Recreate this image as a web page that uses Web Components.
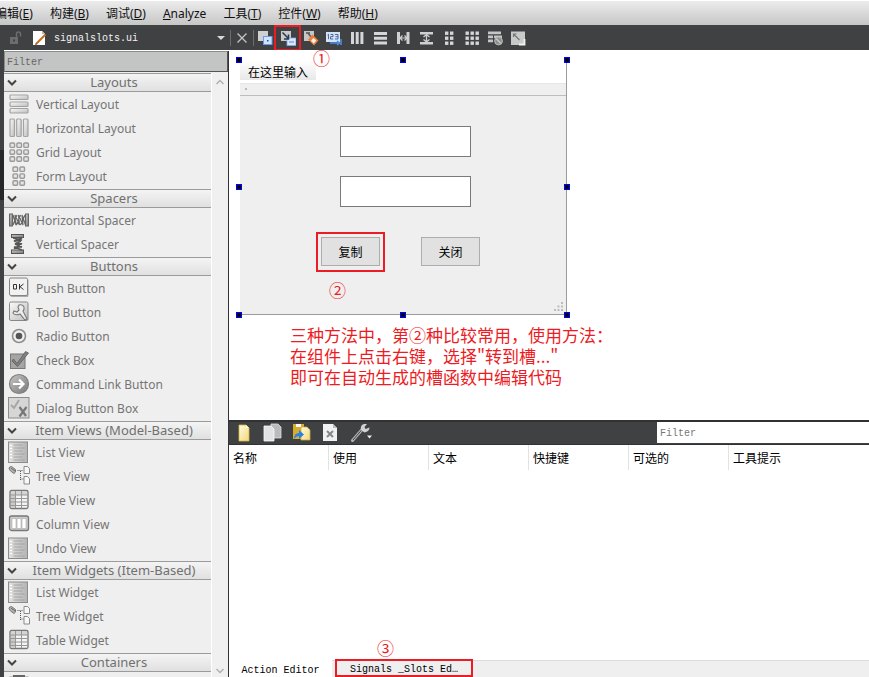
<!DOCTYPE html>
<html lang="zh-CN">
<head>
<meta charset="utf-8">
<meta name="viewport" content="width=device-width, initial-scale=1">
<title>signalslots.ui</title>
<style>
  html, body { margin: 0; height: 100%; }
  body {
    --ui: "Noto Sans", "Noto Sans CJK SC", sans-serif;
    --cjk: "Noto Sans CJK SC", sans-serif;
    --mono: "Liberation Mono", "Noto Sans CJK SC", monospace;
    --dark: #404142;
    --red: #ed1c24;
    font: 12px/16px var(--ui);
    color: #000;
    overflow: hidden;
  }
</style>
</head>
<body>
<script>
const define = (name, html, setup) => {
  const template = document.createElement('template');
  template.innerHTML = html;
  customElements.define(name, class extends HTMLElement {
    constructor() {
      super();
      this.attachShadow({ mode: 'open' }).append(template.content.cloneNode(true));
    }
    connectedCallback() {
      if (setup && !this.ready) { this.ready = true; setup(this, this.shadowRoot); }
    }
  });
};

/* ---------- icons ---------- */
const defs = `<defs>
  <linearGradient id="g" x1="0" y1="0" x2="1" y2="1"><stop offset="0" stop-color="#fafafa"/><stop offset="1" stop-color="#bdbdbd"/></linearGradient>
  <linearGradient id="d" x1="0" y1="0" x2="1" y2="1"><stop offset="0" stop-color="#c8c8c8"/><stop offset="1" stop-color="#777"/></linearGradient>
  <linearGradient id="h"><stop offset="0" stop-color="#e2e2e2"/><stop offset="1" stop-color="#b4b4b4"/></linearGradient>
  <linearGradient id="y" x1="0" y1="0" x2="1" y2="1"><stop offset="0" stop-color="#fffbe0"/><stop offset="1" stop-color="#f2d87a"/></linearGradient>
</defs>`;
const cells = (cols, rows, x0, y0) => {
  let s = '';
  for (let r = 0; r < rows; r++) for (let c = 0; c < cols; c++)
    s += `<rect x="${x0 + c * 6.9}" y="${y0 + r * 6.9}" width="4.6" height="4.4" rx="1"/>`;
  return `<g fill="#e4e4e4" stroke="#9a9a9a" stroke-width="1.4">${s}</g>`;
};
const dots = (cols, x0) => {
  let s = '';
  for (let r = 0; r < 3; r++) for (let c = 0; c < cols; c++)
    s += `<rect x="${x0 + c * 5}" y="${1.5 + r * 5}" width="3.4" height="3.4"/>`;
  return `<g fill="#d6d6d6">${s}</g>`;
};
const listArt = `<rect x=".5" y="1" width="19" height="20.5" fill="url(#h)" stroke="#8c8c8c"/>
  <path d="M2 4.5h2M2 7.5h2M2 10.500h2M2 13.500h2M2 16.500h2" stroke="#fff"/><path d="M5.500 4h9M5.500 7h11M5.500 10h9M5.500 13h11M5.500 16h9M5.500 19h11" stroke="#9a9a9a" stroke-width=".8"/><path d="M21 1v21" stroke="#fff"/>`;
const treeArt = `<path d="M1 3.500q0-2 2.500-2l4 3q.800 3-1.500 4l-3.500-2.500z" fill="#b3b3b3" stroke="#777"/><path d="M3 3l4 3" stroke="#666"/>
  <path d="M9.500 5.500h5M12.500 6v9.500M12.500 14h3" stroke="#555" stroke-dasharray="1 1" fill="none"/>
  <path d="M16 1.500h3.500l2 2v5H16zM16 11.500h3.500l2 2v5.500H16z" fill="#f8f8f8" stroke="#8a8a8a"/>`;
const tableArt = `<rect x="2" y="1.500" width="18" height="18" rx="1.500" fill="#f3f3f3" stroke="#777" stroke-width="1.300"/><path d="M3 3h4v16H3z" fill="#ccc"/><path d="M3 3h16v3H3z" fill="#d4d4d4"/>
  <path d="M7.500 2v17M13.500 2v17M2 6h18M2 9.500h18M2 13h18M2 16.500h18" stroke="#979797"/>`;
const art = {
  vlayout: `<g fill="url(#g)" stroke="#a3a3a3" stroke-width="1.200"><rect x="2" y="2" width="18" height="4.500" rx="1"/><rect x="2" y="9" width="18" height="4.500" rx="1"/><rect x="2" y="15.500" width="18" height="4.500" rx="1"/></g>`,
  hlayout: `<g fill="url(#g)" stroke="#a3a3a3" stroke-width="1.200"><rect x="2" y="2" width="4.500" height="17.500" rx="1"/><rect x="8.700" y="2" width="4.500" height="17.500" rx="1"/><rect x="15.500" y="2" width="4.500" height="17.500" rx="1"/></g>`,
  grid: cells(3, 3, 2, 2),
  form: cells(2, 3, 5, 2),
  hspacer: `<g fill="url(#d)" stroke="#666"><rect x="1.500" y="5" width="3" height="12"/><rect x="17.500" y="5" width="3" height="12"/></g><path d="M5 6l3 10-1-10 4.500 10-1-10 4.500 10-1-10 3.500 10M5 16l4-10M8.500 16l4-10M12.500 16l4.500-10" fill="none" stroke="#666" stroke-width="1.200"/>`,
  vspacer: `<g fill="url(#d)" stroke="#555"><rect x="3.500" y="1.500" width="12" height="3"/><rect x="3.500" y="17" width="12" height="3.500"/></g><path d="M5 5l9 2-8 1 8 3-7 0 7 3-8 0 8 3M14 5L6 8M13 8l-6 3M13 11l-7 5" fill="none" stroke="#555" stroke-width="1.400"/>`,
  push: `<rect x="2.500" y="2" width="18" height="18" rx="1.500" fill="#aaa"/><rect x="1.500" y="1" width="18" height="17.500" rx="1.500" fill="#f1f1f1" stroke="#848484"/><path d="M5.500 7.500h3v4.500h-3zM11.500 7v5.500M15.500 7l-3.500 2.700 3.500 2.800" fill="none" stroke="#333"/>`,
  tool: `<rect x="1.500" y="1" width="18.500" height="18.500" rx="1.500" fill="url(#g)" stroke="#888"/><path d="M11 4q4-1 5 2 .500 3-1 4l4 8-2 1-5-6q-5 2-7-1l1-2 3 1 2-2-1-3z" fill="#ececec" stroke="#777" stroke-width="1.100"/>`,
  radio: `<circle cx="11" cy="11" r="6.500" fill="#efefef" stroke="#8d8d8d" stroke-width="1.600"/><circle cx="11" cy="11" r="3.300" fill="#555"/>`,
  check: `<rect x="2.500" y="5" width="14.500" height="14.500" fill="#a5a5a5" stroke="#777"/><path d="M5.500 10l3.500 4.500L17.500 2.500l3 1.500L9.500 17.500 4 12z" fill="#808080" stroke="#5c5c5c" stroke-width=".8"/>`,
  link: `<circle cx="11" cy="11" r="9.500" fill="url(#d)" stroke="#808080" stroke-width="1.200"/><path d="M5 11h10M11 6.500l4.500 4.500-4.500 4.500" fill="none" stroke="#fff" stroke-width="2.200"/>`,
  dialog: `<rect x=".5" y=".5" width="20.500" height="20.500" fill="#d6d6d6" stroke="#8c8c8c"/><path d="M3 8l3 3 5-8" fill="none" stroke="#a6a6a6" stroke-width="2"/><path d="M11.500 10l6.500 9M18.500 10l-7 9.500" stroke="#777" stroke-width="2.200"/>`,
  list: listArt, tree: treeArt, table: tableArt,
  column: `<rect x="1.500" y="3" width="19" height="14.500" rx="2" fill="#ccc" stroke="#777" stroke-width="1.300"/><path d="M4 5.500h4v10H4zM9 5.500h4v10H9zM14 5.500h4v10h-4z" fill="#fff" stroke="#aaa" stroke-width=".6"/>`,
  container: `<rect x="2" y="4" width="18" height="16" fill="#ddd" stroke="#999"/><path d="M5 2h12v6H5z" fill="#666"/>`
};
const tools = {
  lock: `<rect x="2" y="7" width="8" height="7" fill="#6c6d6e"/><path d="M8.500 7V4q0-2 2-2t2 2v2.500" fill="none" stroke="#6c6d6e" stroke-width="1.500"/><rect x="5" y="9.500" width="2" height="2" fill="#404142"/>`,
  doc: `<path d="M2 1h9l3 3v11H2z" fill="#fff"/><path d="M11 1v3h3z" fill="#bbb"/><path d="M5.500 13.500l9-9" stroke="#c8701c" stroke-width="2.200"/><path d="M4.200 15l.600-2.200 1.500 1.500z" fill="#333"/>`,
  close: `<path d="M3.500 3.500l9 9M12.500 3.500l-9 9" stroke="#c4c5c6" stroke-width="1.300"/>`,
  widgets: `<rect x="1" y="1" width="10" height="10" fill="#d0d0d0"/><rect x="6.500" y="6.500" width="8.500" height="8" fill="#cfe2ff" stroke="#6a9ae8"/><rect x="10" y="10" width="1.500" height="1.500" fill="#224f9a"/>`,
  signals: `<rect x="1" y="1" width="10" height="10" fill="#c9c9c9"/><rect x="7" y="8" width="9" height="7.500" fill="#d9e8ff" stroke="#7fa8e8" stroke-width=".8"/><path d="M2.500 2.500l6 6M8.500 4.500v4.500h-4.500" fill="none" stroke="#26394f" stroke-width="1.500"/><path d="M9 12h5" stroke="#5b87cc"/>`,
  buddies: `<rect x="1" y="1" width="10" height="10" fill="#c6c6c6"/><path d="M3 3h4M5 3l3 4" stroke="#555" stroke-width="1.300"/><path d="M9.500 4.500l6 6-4.500 5-6-6z" fill="#e7803c"/><path d="M10.500 8l2.800 2.500-2.600 3-2.700-2.700z" fill="#fff3e7"/>`,
  order: `<rect x="0" y="2" width="14" height="10" fill="#d4e2f4"/><path d="M1.500 5l1-.8v5M4.500 4.500h2.500v2.200H4.500v2.300h2.700M9 4.500h3v4.500H9M9.500 6.700H12" fill="none" stroke="#3d5f97" stroke-width=".9"/><path d="M4 13h9M11 11l2.500 2-2.500 2M15 9v6" fill="none" stroke="#4d8ee6" stroke-width="1.500"/>`,
  cols: `<path d="M2 2h3v12H2zM6.700 2h3v12h-3zM11.400 2h3v12h-3z" fill="#d6d6d6"/>`,
  rows: `<path d="M2 2h13v3H2zM2 6.700h13v3H2zM2 11.400h13v3H2z" fill="#d6d6d6"/>`,
  hsplit: `<path d="M2 2h3v12H2zM11.500 2h3v12h-3z" fill="#d0d0d0"/><path d="M5 8h7M7.500 5.500L5 8l2.500 2.500M9.500 5.500L12 8l-2.500 2.500" fill="none" stroke="#d0d0d0" stroke-width="1.200"/>`,
  vsplit: `<path d="M2 2h13v2.500H2zM2 12h13v2.500H2z" fill="#d0d0d0"/><path d="M8.500 4v8M5.500 7l3-2.500 3 2.500M5.500 9.500l3 2.500 3-2.500" fill="none" stroke="#d0d0d0" stroke-width="1.300"/>`,
  twocol: dots(2, 4), grid3: dots(3, 1.5),
  reset: `<path d="M1 1.500h13v2.800H1zM1 5.500h5v2.800H1zM7 5.500h8v2.800H7zM1 9.500h5v2.800H1z" fill="#c6c6c6"/><circle cx="11.500" cy="11" r="4.300" fill="#8e8e8e"/><path d="M9 8.500l5 5" stroke="#ccc" stroke-width="1.200"/><circle cx="11.500" cy="11" r="3.800" fill="none" stroke="#b8b8b8"/>`,
  adjust: `<rect x="1" y="1.500" width="14" height="13.500" fill="#c9c9c9"/><path d="M3.500 4l6 6M3.500 7V4h3" fill="none" stroke="#777" stroke-width="1.200"/><path d="M9 14.500h5.500V9" fill="none" stroke="#f2f2f2" stroke-width="1.800"/>`,
  anew: `<path d="M3 1h7l3 3v13H3z" fill="url(#y)" stroke="#d8b848" stroke-width=".8"/><path d="M10 1v3h3z" fill="#fff"/>`,
  copy: `<path d="M8 1h7l3 3v11H8z" fill="#bbb" stroke="#ddd" stroke-width=".8"/><path d="M1 3h7l3 3v12H1z" fill="#e2e2e2" stroke="#fafafa" stroke-width=".8"/>`,
  paste: `<rect x="1" y="1" width="11" height="15" fill="#d8ad2c"/><rect x="4" y="1" width="5" height="3" fill="#fff"/><path d="M9 4h6l3 3v10H9z" fill="url(#y)" stroke="#caa94a" stroke-width=".8"/><path d="M2 16q0-6 5-6V7l5 4.500L7 16v-3q-3 0-5 3z" fill="#2c82e0"/>`,
  del: `<path d="M2 1h10l4 4v13H2z" fill="#f1f1f1"/><path d="M12 1v4h4z" fill="#bbb"/><path d="M6 8l6 6M12 8l-6 6" stroke="#888" stroke-width="2"/>`,
  wrench: `<path d="M2.500 18.500l10-11.500" stroke="#b4b4b4" stroke-width="3" stroke-linecap="round"/><path d="M3 18l9-10.500" stroke="#404142" stroke-width="1"/><path d="M11 8q-1-5 3-6l3 0-2.500 3 1 2 4-1.500q0 4-5 5z" fill="#d2d2d2"/><path d="M17 13.500h5l-2.500 3z" fill="#f0f0f0"/>`
};
define('ui-icon', `<style>:host{display:block;flex:none;line-height:0}svg{display:block}</style>`, (host, root) => {
  const name = host.getAttribute('name'), size = host.getAttribute('size') || '16';
  const body = host.hasAttribute('widget') ? art[name] : tools[name];
  root.innerHTML += `<svg width="${size}" height="${size}" viewBox="0 0 ${size} ${size}" aria-hidden="true">${defs}${body}</svg>`;
});

/* ---------- menu bar ---------- */
define('menu-bar', `<style>
  :host{display:block;flex:none;overflow:hidden;background:linear-gradient(#ececec,#c6c6c6);border-top:1px solid #fff}
  nav{display:flex;gap:1px;height:24px;align-items:center;margin-left:-13px}
  button{flex:none;border:0;background:none;padding:2px 8px 0;font:12px/22px var(--ui);color:#111}
  u{text-underline-offset:1px}
</style>
<nav>
  <button>编辑(<u>E</u>)</button><button>构建(<u>B</u>)</button><button>调试(<u>D</u>)</button><button><u>A</u>nalyze</button><button>工具(<u>T</u>)</button><button>控件(<u>W</u>)</button><button>帮助(<u>H</u>)</button>
</nav>`);

/* ---------- editor tool bar ---------- */
define('tool-button', `<style>
  :host{display:block;flex:none}
  button{display:block;border:0;background:none;padding:0}
</style><button><ui-icon></ui-icon></button>`, (host, root) => {
  const icon = document.createElement('ui-icon');
  icon.setAttribute('name', host.getAttribute('name'));
  icon.setAttribute('size', host.getAttribute('size') || '16');
  const button = root.querySelector('button');
  button.setAttribute('aria-label', host.getAttribute('name'));
  button.replaceChildren(icon);
});
define('editor-bar', `<style>
  :host{display:flex;flex:none;height:25px;align-items:center;background:var(--dark);padding-left:8px;gap:7px}
  .file{display:flex;align-items:center;width:171px;flex:none}
  select{appearance:none;border:0;background:none;color:#f2f2f2;font:10px/16px var(--mono);flex:1;min-width:0;padding:2px 0 0}
  svg{flex:none}
  i{width:1px;height:16px;background:#6c6d6e;flex:none}
  .group{display:flex;gap:7px;margin-left:-4px}
  .close{display:flex;gap:3px;align-items:center;margin-left:-2px}
  .hot{position:relative}
  .hot::after{content:"";position:absolute;inset:-5px -5px -5px -6px;border:2px solid var(--red);pointer-events:none}
</style>
<tool-button name="lock"></tool-button><tool-button name="doc"></tool-button>
<label class="file"><select aria-label="文件"><option>signalslots.ui</option></select><svg width="8" height="4"><path d="M0 0h8L4 4z" fill="#d8d8d8"/></svg></label>
<div class="close"><i></i><tool-button name="close"></tool-button><i></i></div>
<div class="group"><tool-button name="widgets"></tool-button><tool-button class="hot" name="signals"></tool-button><tool-button name="buddies"></tool-button><tool-button name="order"></tool-button><tool-button name="cols"></tool-button><tool-button name="rows"></tool-button><tool-button name="hsplit"></tool-button><tool-button name="vsplit"></tool-button><tool-button name="twocol"></tool-button><tool-button name="grid3"></tool-button><tool-button name="reset"></tool-button><tool-button name="adjust"></tool-button></div>`);

/* ---------- widget box ---------- */
define('widget-item', `<style>
  :host{display:block}
  button{display:flex;width:100%;height:24px;align-items:center;gap:6px;border:0;background:none;padding:0 4px;font:12px/20px var(--ui);color:#757575;text-align:left}
  .text{padding-top:2px}
</style><button><span class="icon"></span><span class="text"><slot></slot></span></button>`, (host, root) => {
  const icon = document.createElement('ui-icon');
  icon.setAttribute('name', host.getAttribute('icon'));
  icon.setAttribute('size', '22');
  icon.setAttribute('widget', '');
  root.querySelector('.icon').replaceWith(icon);
});
define('widget-group', `<style>
  :host{display:block;padding-bottom:1px}
  button{display:flex;width:100%;height:19px;align-items:center;border:solid #9b9b9b;border-width:1px 0;background:linear-gradient(#f4f4f4,#e0e0e0);padding:0 0 0 3px;font:13px/17px var(--ui);color:#707070}
  svg{flex:none}
  span{flex:1;text-align:center;white-space:nowrap}
</style>
<button aria-expanded="true"><svg width="10" height="8"><path d="M1 1.500l4 4 4-4" fill="none" stroke="#444" stroke-width="2"/></svg><span></span></button><slot></slot>`,
  (host, root) => { root.querySelector('span').textContent = host.getAttribute('label'); });
define('widget-box', `<style>
  :host{display:flex;flex-direction:column;flex:none;width:225px;box-sizing:border-box;border-right:1px solid #333;background:#efefef;overflow:hidden}
  input{flex:none;height:21px;box-sizing:border-box;border:1px solid #8b8c8c;border-color:#8b8c8c #555 #555 #8b8c8c;background:#c3c5c4;padding:2px 2px 0;font:10px/16px var(--mono);outline:0;min-width:0}
  input::placeholder{color:#666;opacity:1}
  .body{display:flex;flex:1;min-height:0;padding-top:1px}
  .list{flex:1;min-width:0;overflow:hidden}
  .bar{display:flex;flex-direction:column;justify-content:space-between;align-items:center;flex:none;width:17px;border-left:1px solid #fff;box-sizing:border-box;padding:6px 0 3px;background:#f0f0f0}
  .bar button{border:0;background:none;padding:0;line-height:0}
</style>
<input placeholder="Filter" aria-label="Filter">
<div class="body"><div class="list"><slot></slot></div>
<div class="bar"><button aria-label="上"><svg width="8" height="6"><path d="M.500 5L4 1.500 7.500 5" fill="none" stroke="#b0b0b0" stroke-width="1.500"/></svg></button><button aria-label="下"><svg width="8" height="6"><path d="M.500 1L4 4.500 7.500 1" fill="none" stroke="#b0b0b0" stroke-width="1.500"/></svg></button></div></div>`);

/* ---------- form canvas ---------- */
define('form-window', `<style>
  :host{display:block;box-sizing:border-box;width:327px;height:255px;background:#efefef;border:solid #9b9b9b;border-width:0 1px 1px 0}
  .menu{display:flex;height:23px;background:#fff;border-bottom:1px solid #e6e6e6}
  .menu button{border:0;height:20px;padding:0 8px;font:12px/24px var(--cjk);background:linear-gradient(#fff,#e8e8e8)}
  .tools{height:11px;border-bottom:1px solid #bdbdbd}
  .tools::before{content:"";display:block;width:2px;height:2px;margin-left:5px;border-top:4px solid transparent;background:#bbb;background-clip:padding-box}
  .field,.push{position:absolute;box-sizing:border-box;border-radius:0}
  .field{left:100px;width:131px;height:31px;border:1px solid #7a7a7a;background:#fff}
  .push{top:177px;width:59px;height:29px;border:1px solid #adadad;background:#e1e1e1;font:12px/16px var(--cjk);padding:0}
  .grip{position:absolute;right:3px;bottom:3px}
  .h{position:absolute;width:4px;height:4px;border:1px solid #00f;background:#000;margin:-3px}
</style>
<div class="menu"><button>在这里输入</button></div><div class="tools"></div>
<input class="field" style="top:66px" aria-label="输入 1"><input class="field" style="top:116px" aria-label="输入 2">
<button class="push" style="left:81px">复制</button><button class="push" style="left:181px">关闭</button>
<svg class="grip" width="9" height="9"><path d="M7 0h2v2H7zM3.500 3.500h2v2h-2zM7 3.500h2v2H7zM0 7h2v2H0zM3.500 7h2v2h-2zM7 7h2v2H7z" fill="#bdbdbd"/></svg>`,
  (host, root) => {
    for (const y of ['0px', '50%', 'calc(100% + 1px)']) for (const x of ['-1px', '50%', 'calc(100% + 1px)']) {
      if (x === '50%' && y === '50%') continue;
      const h = document.createElement('div');
      h.className = 'h'; h.style.left = x; h.style.top = y;
      root.append(h);
    }
  });
define('form-canvas', `<style>
  :host{display:block;position:relative;height:370px;flex:none;background:#fff}
  form-window{position:absolute;left:11px;top:10px}
  .mark{position:absolute;font:17px/20px var(--cjk);color:var(--red)}
  .box{position:absolute;left:87px;top:182px;width:65px;height:36px;border:2px solid var(--red);pointer-events:none}
  p{position:absolute;left:61px;top:274px;margin:0;font:17px/21px var(--cjk);color:var(--red);white-space:nowrap}
</style>
<form-window></form-window><div class="box"></div>
<span class="mark" style="left:84px;top:-2px">①</span><span class="mark" style="left:100px;top:230px">②</span>
<p>三种方法中，第②种比较常用，使用方法：<br>在组件上点击右键，选择"转到槽..."<br>即可在自动生成的槽函数中编辑代码</p>`);

/* ---------- action editor ---------- */
define('action-editor', `<style>
  :host{display:flex;flex-direction:column;flex:1;min-height:0;background:#fff}
  .bar{display:flex;flex:none;height:25px;box-sizing:border-box;align-items:center;background:var(--dark);border:solid #303132;border-width:2px 0 1px;padding-left:7px;gap:9px}
  .bar input{height:21px;box-sizing:border-box;border:0;padding:2px 3px 0;margin-left:auto;font:10px/16px var(--mono);background:#fff;outline:0;flex:0 1 212px;min-width:0;align-self:stretch}
  input::placeholder{color:#777;opacity:1}
  table{border-collapse:separate;border-spacing:0;table-layout:fixed;width:100%;flex:none}
  th{width:100px;height:25px;box-sizing:border-box;padding:0 4px;text-align:left;font:12px/24px var(--cjk);border-right:1px solid #e2e2e2}
  th:last-child{width:auto;border:0}
  .space{flex:1}
  .tabs{position:relative;display:flex;flex:none;height:17px}
  .tabs button{flex:none;border:0;padding:0;font:10px/16px var(--mono);color:#000;white-space:pre;background:#fff}
  .tabs .one{width:103px;padding:3px 0 0;text-align:center}
  .tabs .two{width:138px;height:18px;box-sizing:border-box;background:#efefef;text-align:center;margin:-2px 0 0 3px;border:2px solid var(--red);padding:1px 0 0}
  .rest{flex:1;display:flex;background:#efefef;border-top:1px solid #dcdcdc}
  .mark{position:absolute;left:148px;bottom:19px;font:17px/20px var(--cjk);color:var(--red)}
</style>
<div class="bar"><tool-button name="anew" size="18"></tool-button><tool-button name="copy" size="20"></tool-button><tool-button name="paste" size="20"></tool-button><tool-button name="del" size="20"></tool-button><tool-button name="wrench" size="22"></tool-button><input placeholder="Filter" aria-label="Filter"></div>
<table><thead><tr><th>名称</th><th>使用</th><th>文本</th><th>快捷键</th><th>可选的</th><th>工具提示</th></tr></thead></table>
<div class="space"></div>
<div class="tabs" role="tablist"><button class="one" role="tab" aria-selected="true">Action Editor</button><div class="rest"><button class="two" role="tab">Signals _Slots Ed…</button></div><span class="mark">③</span></div>`);

/* ---------- application window ---------- */
define('designer-app', `<style>
  :host{display:flex;flex-direction:column;height:100vh;overflow:hidden}
  .work{display:flex;flex:1;min-height:0}
  .edge{flex:none;width:4px;background:linear-gradient(var(--dark) 100px,#262728 100px 150px,var(--dark) 150px)}
  main{display:flex;flex-direction:column;flex:1;min-width:0}
  widget-box{margin-top:1px}
</style>
<menu-bar></menu-bar><editor-bar></editor-bar>
<div class="work"><div class="edge"></div>
<widget-box>
  <widget-group label="Layouts"><widget-item icon="vlayout">Vertical Layout</widget-item><widget-item icon="hlayout">Horizontal Layout</widget-item><widget-item icon="grid">Grid Layout</widget-item><widget-item icon="form">Form Layout</widget-item></widget-group>
  <widget-group label="Spacers"><widget-item icon="hspacer">Horizontal Spacer</widget-item><widget-item icon="vspacer">Vertical Spacer</widget-item></widget-group>
  <widget-group label="Buttons"><widget-item icon="push">Push Button</widget-item><widget-item icon="tool">Tool Button</widget-item><widget-item icon="radio">Radio Button</widget-item><widget-item icon="check">Check Box</widget-item><widget-item icon="link">Command Link Button</widget-item><widget-item icon="dialog">Dialog Button Box</widget-item></widget-group>
  <widget-group label="Item Views (Model-Based)"><widget-item icon="list">List View</widget-item><widget-item icon="tree">Tree View</widget-item><widget-item icon="table">Table View</widget-item><widget-item icon="column">Column View</widget-item><widget-item icon="list">Undo View</widget-item></widget-group>
  <widget-group label="Item Widgets (Item-Based)"><widget-item icon="list">List Widget</widget-item><widget-item icon="tree">Tree Widget</widget-item><widget-item icon="table">Table Widget</widget-item></widget-group>
  <widget-group label="Containers"><widget-item icon="container"></widget-item></widget-group>
</widget-box>
<main><form-canvas></form-canvas><action-editor></action-editor></main></div>`);
</script>
<designer-app></designer-app>
</body>
</html>
